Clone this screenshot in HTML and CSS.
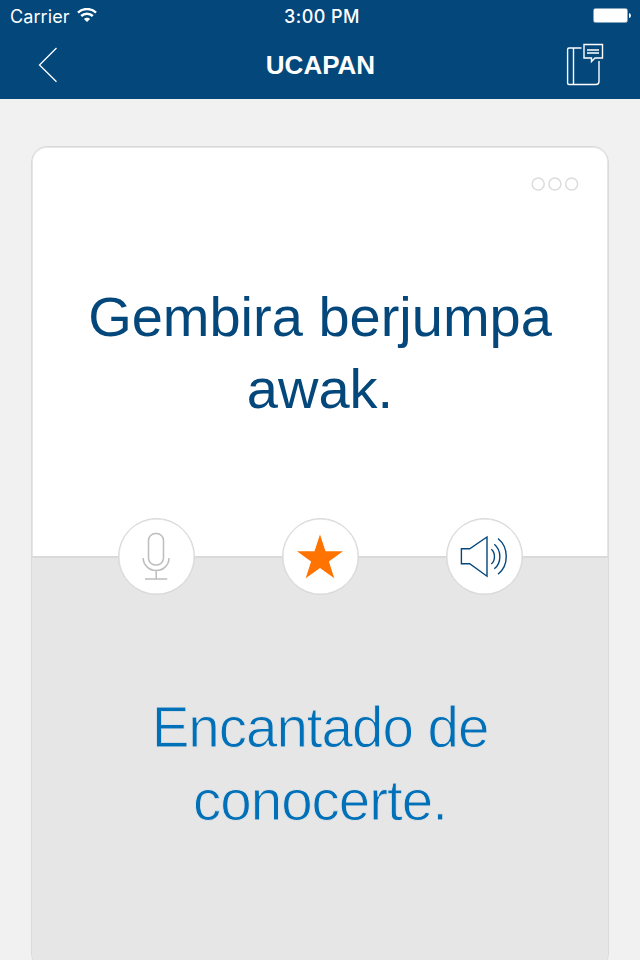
FILE: index.html
```
<!DOCTYPE html>
<html lang="ms">
<head>
<meta charset="utf-8">
<title>Ucapan</title>
<link rel="stylesheet" href="styles.css">
</head>
<body>
<header class="header">
  <div class="status">
    <div class="carrier"><span class="carrier-name">Carrier</span>
      <svg class="wifi" width="20" height="16" viewBox="0 0 20 16" fill="none" stroke="#fff" stroke-width="2.5"><path d="M1 4.700C6 -.1 14 -.1 19 4.700M4.200 8C7.300 5 12.700 5 15.800 8"/><path d="M10 14L6.900 10.900C8.500 9.200 11.500 9.200 13.100 10.900Z" fill="#fff" stroke="none"/></svg>
    </div>
    <span class="time">3:00 PM</span>
    <svg class="battery" width="38" height="16" viewBox="0 0 38 16"><rect x=".5" y=".5" width="34" height="14" rx="2" fill="none" stroke="#fff" stroke-opacity=".5"/><rect x="1" y="1" width="33" height="13" rx="1" fill="#fff"/><path d="M36 5Q38 5.500 38 7.500T36 10Z" fill="#fff"/></svg>
  </div>
  <nav class="nav">
    <svg class="back" width="20" height="36" viewBox="0 0 20 36" fill="none" stroke="#fff" stroke-width="1.300"><path d="M18.500 1L1.500 18L18.500 34.800"/></svg>
    <h1 class="title">UCAPAN</h1>
    <svg class="book" width="38" height="44" viewBox="0 0 38 44" fill="none" stroke="#fff" stroke-width="1.400"><path d="M15.500 5H3Q1.600 5 1.600 6.500V40Q1.600 41.500 3 41.500H30Q33 41.500 33 38.500V18M7.500 5V41.500"/><path d="M18 1.500H36.500V15H29L25.500 18.500V15H18Z"/><path d="M21 7H33M21 10H33"/></svg>
  </nav>
</header>
<main class="card">
  <section class="phrase">
    <svg class="more" width="48" height="14" viewBox="0 0 48 14" fill="none" stroke="#dcdcdc" stroke-width="1.500"><circle cx="7.200" cy="7" r="6"/><circle cx="23.900" cy="7" r="6"/><circle cx="40.600" cy="7" r="6"/></svg>
    <p class="source">Gembira berjumpa<br>awak.</p>
  </section>
  <section class="translation">
    <div class="actions">
      <button class="action" aria-label="Record"><svg width="76" height="76" viewBox="0 0 76 76" fill="none" stroke="#bdbdbd" stroke-width="1.500"><rect x="30.500" y="15.500" width="15" height="31.500" rx="7"/><path d="M25.200 40C25.200 47 31 52.500 38.200 52.500S51 47 51 40M38.200 52.500V61M27 61H49.200"/></svg></button>
      <button class="action" aria-label="Favourite"><svg width="76" height="76" viewBox="0 0 76 76"><path fill="#ff7300" d="M38 16.500L43.500 33.200H61L46.900 43.500L52.300 60.300L38 50L23.700 60.300L29.100 43.500L15 33.200H32.500Z"/></svg></button>
      <button class="action" aria-label="Listen"><svg width="76" height="76" viewBox="0 0 76 76" fill="none" stroke="#04477b" stroke-width="1.400"><path d="M15.400 30.800H23.700L41 19V58.200L23.700 45.700H15.400Z"/><path d="M45.300 31.300C49.500 34.700 49.500 42.700 45.300 46M48.300 26.300C55.700 32.600 55.700 44.800 48.300 50.800M52 20.500C63 29.500 63 47.500 52 56.300"/></svg></button>
    </div>
    <p class="target">Encantado de<br>conocerte.</p>
  </section>
</main>
</body>
</html>
```
FILE: styles.css
```
* { box-sizing: border-box; }
body {
  margin: 0;
  height: 960px;
  overflow: hidden;
  background: #f1f1f1;
  font-family: "Liberation Sans", Arial, sans-serif;
}
p, h1 { margin: 0; }
svg { display: block; }
.header {
  height: 99px;
  background: #04477b;
  color: #fff;
}
.status {
  display: grid;
  grid-template-columns: 1fr auto 1fr;
  height: 33px;
  padding: 0 9px 0 10px;
  font: 18px/33px Inter, sans-serif;
}
.carrier { display: flex; gap: 8px; }
.carrier-name { width: 59px; letter-spacing: 0.1px; }
.wifi { margin-top: 8px; }
.time { margin-left: 3px; font-weight: 500; letter-spacing: 0.45px; }
.battery { justify-self: end; margin-top: 8px; }
.nav {
  display: grid;
  grid-template-columns: 1fr auto 1fr;
  height: 66px;
  padding: 0 36px 0 38px;
}
.back { margin-top: 14px; }
.title {
  margin-left: -1px;
  font: bold 26px/65px "Liberation Sans", Arial, sans-serif;
}
.book { justify-self: end; margin-top: 10px; }
.card {
  width: 578px;
  height: 824px;
  margin: 47px auto 0;
  border: 1px solid #dadada;
  border-radius: 16px;
  box-shadow: inset 0 0 0 1px #e6e6e6;
  overflow: hidden;
  background: #fff;
}
.phrase {
  height: 409px;
  text-align: center;
  padding-top: 30px;
}
.more { margin: 0 29px 0 auto; }
.source {
  margin-top: 90px;
  color: #04477b;
  font-size: 56px;
  line-height: 72px;
}
.translation {
  height: 413px;
  background: #e6e6e6;
  border-top: 2px solid #dadada;
  text-align: center;
}
.actions {
  display: flex;
  justify-content: center;
  gap: 87px;
  margin: -40px 0 0 1px;
}
.action {
  width: 77px;
  height: 77px;
  padding: 0;
  border: 1px solid #d6d6d6;
  box-shadow: inset 0 0 0 0.5px #dedede;
  border-radius: 50%;
  background: #fff;
}
.action svg { margin: -2px -1px -1px; }
.target {
  margin-top: 96px;
  color: #0070b8;
  font-size: 56.5px;
  letter-spacing: -1px;
  line-height: 73px;
  -webkit-text-stroke: 0.9px #e6e6e6;
}
```
